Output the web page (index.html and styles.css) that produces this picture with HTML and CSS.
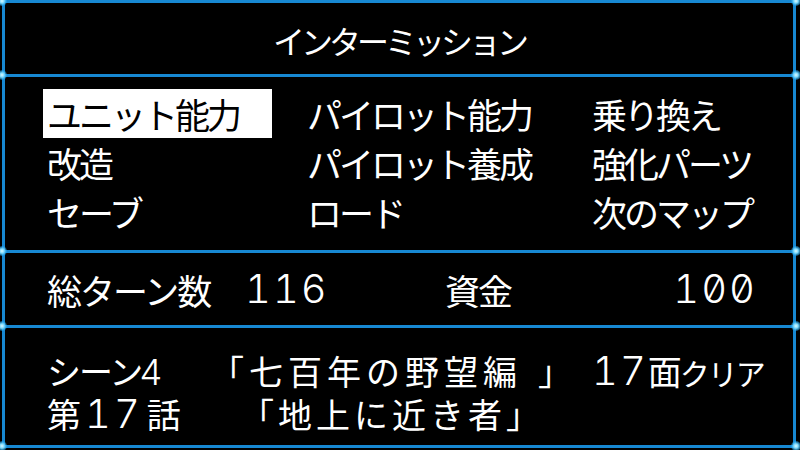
FILE: index.html
```html
<!DOCTYPE html>
<html lang="ja">
<head>
<meta charset="utf-8">
<title>インターミッション</title>
<link rel="stylesheet" href="styles.css">
</head>
<body>
<div class="screen">
  <section class="panel title">インターミッション</section>
  <section class="panel menu">
    <div class="item sel">ユニット能力</div>
    <div class="item">パイロット能力</div>
    <div class="item">乗り換え</div>
    <div class="item">改造</div>
    <div class="item">パイロット養成</div>
    <div class="item">強化パーツ</div>
    <div class="item">セーブ</div>
    <div class="item">ロード</div>
    <div class="item">次のマップ</div>
  </section>
  <section class="panel stats">
    <span class="label turns">総ターン数</span>
    <span class="num value">116</span>
    <span class="label">資金</span>
    <span class="num money">100</span>
  </section>
  <section class="panel scene">
    <div class="line">
      <span class="c1">シーン<span class="num d4">4</span></span>
      <span class="c2">「七百年の野望編<span class="close">」</span></span>
      <span class="c3"><span class="num">17</span>面<span class="small">クリア</span></span>
    </div>
    <div class="line">
      <span class="c1b">第<span class="num d17">17</span>話</span>
      <span class="c2b">「地上に近き者」</span>
    </div>
  </section>
  <i class="dot l" style="top:1px"></i>
  <i class="dot l" style="top:75px"></i>
  <i class="dot l" style="top:251px"></i>
  <i class="dot l" style="top:326px"></i>
  <i class="dot l" style="top:446px"></i>
  <i class="dot r" style="top:1px"></i>
  <i class="dot r" style="top:75px"></i>
  <i class="dot r" style="top:251px"></i>
  <i class="dot r" style="top:326px"></i>
  <i class="dot r" style="top:446px"></i>
</div>
</body>
</html>
```
FILE: styles.css
```css
html, body {
  margin: 0;
  padding: 0;
  background: #000;
}
body {
  width: 800px;
  height: 450px;
  overflow: hidden;
  color: #fff;
  font-family: "Noto Sans CJK JP", "Noto Sans", sans-serif;
}
.screen {
  position: relative;
  box-sizing: border-box;
  width: 794px;
  height: 448px;
  margin-left: 2px;
  border: 3px solid #1788d2;
  display: flex;
  flex-direction: column;
}
.panel {
  box-sizing: border-box;
}
.panel + .panel {
  border-top: 3px solid #1788d2;
}
.title {
  height: 71px;
  display: flex;
  align-items: center;
  justify-content: center;
  font-size: 32px;
  letter-spacing: -4px;
  padding-top: 2px;
}
.menu {
  height: 176px;
  display: grid;
  grid-template-columns: 260px 285px 1fr;
  grid-auto-rows: 49px;
  padding: 12px 0 0 38px;
  font-size: 35px;
  letter-spacing: -3px;
}
.item {
  line-height: 49px;
  padding-left: 4px;
  white-space: nowrap;
}
.item.sel {
  width: 229px;
  box-sizing: border-box;
  background: #fff;
  color: #000;
}
.stats {
  height: 75px;
  display: flex;
  align-items: center;
  padding: 0 36px 0 42px;
  font-size: 35px;
  letter-spacing: -2px;
}
.turns { width: 198px; }
.value { width: 200px; }
.money { margin-left: auto; }
.num {
  display: inline-block;
  line-height: 1;
  font-family: "Inter", "DejaVu Sans", sans-serif;
  font-feature-settings: "tnum" 1, "zero" 1;
  font-size: 40px;
  font-weight: 300;
  letter-spacing: 2px;
}
.scene {
  flex: 1;
  padding: 21px 0 0 42px;
  font-size: 34px;
  letter-spacing: -2px;
}
.line {
  display: flex;
  height: 43px;
  line-height: 43px;
  white-space: nowrap;
}
.c1 { width: 163px; }
.c2 { width: 382px; letter-spacing: 5px; }
.close { margin-left: 16px; }
.c1b { width: 193px; }
.c2b { letter-spacing: 4px; }
.d4 { font-size: 36px; letter-spacing: 0; margin-left: -2px; }
.d17 { letter-spacing: 3px; margin: 0 4px 0 6px; }
.small { font-size: 30px; }
.dot {
  position: absolute;
  width: 10px;
  height: 10px;
  margin-top: -8px;
  border-radius: 50%;
  background: radial-gradient(circle, #e4fbff 0, #7fdcff 30%, rgba(40,170,240,0.6) 60%, rgba(20,136,210,0) 100%);
}
.dot.l { left: -8px; }
.dot.r { right: -8px; }
```
